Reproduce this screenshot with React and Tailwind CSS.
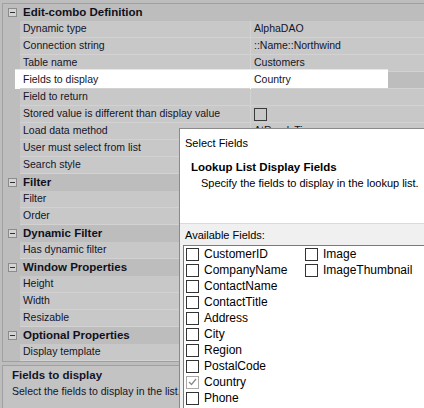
import React from 'react';

const sections = [
  {
    title: 'Edit-combo Definition',
    rows: [
      ['Dynamic type', 'AlphaDAO'],
      ['Connection string', '::Name::Northwind'],
      ['Table name', 'Customers'],
      ['Fields to display', 'Country', 'selected'],
      ['Field to return', ''],
      ['Stored value is different than display value', '', 'check'],
      ['Load data method', 'AtReadyTime'],
      ['User must select from list', ''],
      ['Search style', ''],
    ],
  },
  { title: 'Filter', rows: [['Filter', ''], ['Order', '']] },
  { title: 'Dynamic Filter', rows: [['Has dynamic filter', '']] },
  { title: 'Window Properties', rows: [['Height', ''], ['Width', ''], ['Resizable', '']] },
  { title: 'Optional Properties', rows: [['Display template', '']] },
];

const fields = [
  ['CustomerID', 'Image'],
  ['CompanyName', 'ImageThumbnail'],
  ['ContactName'],
  ['ContactTitle'],
  ['Address'],
  ['City'],
  ['Region'],
  ['PostalCode'],
  ['Country'],
  ['Phone'],
  ['Fax'],
];

const MinusBox = () => (
  <div className="w-[9px] h-[9px] border border-[#8c8c8c] bg-[#d4d4d4] flex items-center justify-center">
    <div className="w-[5px] h-px bg-[#333]" />
  </div>
);

const CategoryRow = ({ title }) => (
  <div className="h-[17px] flex items-center bg-[#bdbdbd]">
    <div className="w-[17px] flex justify-center pl-[2px]">
      <MinusBox />
    </div>
    <span className="pl-[3px] font-bold text-[11.5px] text-[#101020]">{title}</span>
  </div>
);

const PropRow = ({ name, value, kind }) => (
  <div className="relative h-[17px] flex bg-[#bdbdbd]">
    {kind === 'selected' && (
      <div className="absolute left-[12px] -top-[3px] h-[21px] w-[373px] bg-white border-t border-[#e8e8e8]" />
    )}
    <div className="w-[17px] shrink-0" />
    <div
      className={`relative w-[230px] shrink-0 flex items-center pl-[3px] border-b border-[#d2d2d2] whitespace-nowrap overflow-hidden ${
        kind === 'selected' ? '' : 'bg-[#c8c8c8]'
      }`}
    >
      {name}
    </div>
    <div className="w-px bg-[#d2d2d2] shrink-0" />
    <div
      className={`relative flex-1 flex items-center pl-[3px] border-b border-[#d2d2d2] whitespace-nowrap ${
        kind === 'selected' ? '' : 'bg-[#c8c8c8]'
      }`}
    >
      {kind === 'check' ? (
        <div className="w-[13px] h-[13px] border border-[#3a3a3a]" />
      ) : (
        value
      )}
    </div>
  </div>
);

const Check = ({ checked }) =>
  checked ? (
    <div className="w-[13px] h-[13px] shrink-0 border border-[#a8a8a8] bg-white flex items-center justify-center">
      <svg width="9" height="8" viewBox="0 0 9 8">
        <path d="M1 4 L3.5 6.5 L8 1" fill="none" stroke="#8a8a8a" strokeWidth="1.2" />
      </svg>
    </div>
  ) : (
    <div className="w-[13px] h-[13px] shrink-0 border border-[#333] bg-white" />
  );

const App = () => {
  return (
    <div
      className="relative w-[424px] h-[408px] overflow-hidden bg-[#bdbdbd] text-[10.5px] text-[#141428]"
      style={{ fontFamily: '"Liberation Sans", Arial, sans-serif' }}
    >
      <div className="pt-[3px] pl-[2px]">
        <div className="border-l border-t border-b border-[#a0a0a0]">
          {sections.map((s) => (
            <div key={s.title}>
              <CategoryRow title={s.title} />
              {s.rows.map(([n, v, k]) => (
                <PropRow key={n} name={n} value={v} kind={k} />
              ))}
            </div>
          ))}
        </div>
        <div className="mt-[3px] h-[60px] border border-[#a0a0a0] bg-[#c3c3c3] pl-[9px] pt-px">
          <div className="font-bold text-[11.5px] leading-[16px]">Fields to display</div>
          <div className="leading-[16px]">Select the fields to display in the list.</div>
        </div>
      </div>

      <div className="absolute left-[179px] top-[128px] w-[260px] h-[300px] border border-[#8a8a8a] bg-white text-[11px] text-black">
        <div className="h-[95px] border-b border-[#dadada] bg-white">
          <div className="pl-[5px] pt-[7px] leading-[15px]">Select Fields</div>
          <div className="pl-[11px] pt-[9px] font-bold text-[11.5px] leading-[15px]">Lookup List Display Fields</div>
          <div className="pl-[21px] pt-px leading-[15px]">Specify the fields to display in the lookup list.</div>
        </div>
        <div className="bg-[#f0f0f0] pl-[3px] h-full">
          <div className="pl-[2px] pt-[5px] h-[21px] leading-[13px]">Available Fields:</div>
          <div className="border-l border-t border-[#7a7a7a] bg-white pl-[2px] h-[200px] text-[12px]">
            {fields.map(([a, b]) => (
              <div key={a} className="h-[16px] flex items-center">
                <div className="w-[119px] flex items-center">
                  <Check checked={a === 'Country'} />
                  <span className="pl-[5px]">{a}</span>
                </div>
                {b && (
                  <div className="flex items-center">
                    <Check />
                    <span className="pl-[5px]">{b}</span>
                  </div>
                )}
              </div>
            ))}
          </div>
        </div>
      </div>
    </div>
  );
};

export default App;
